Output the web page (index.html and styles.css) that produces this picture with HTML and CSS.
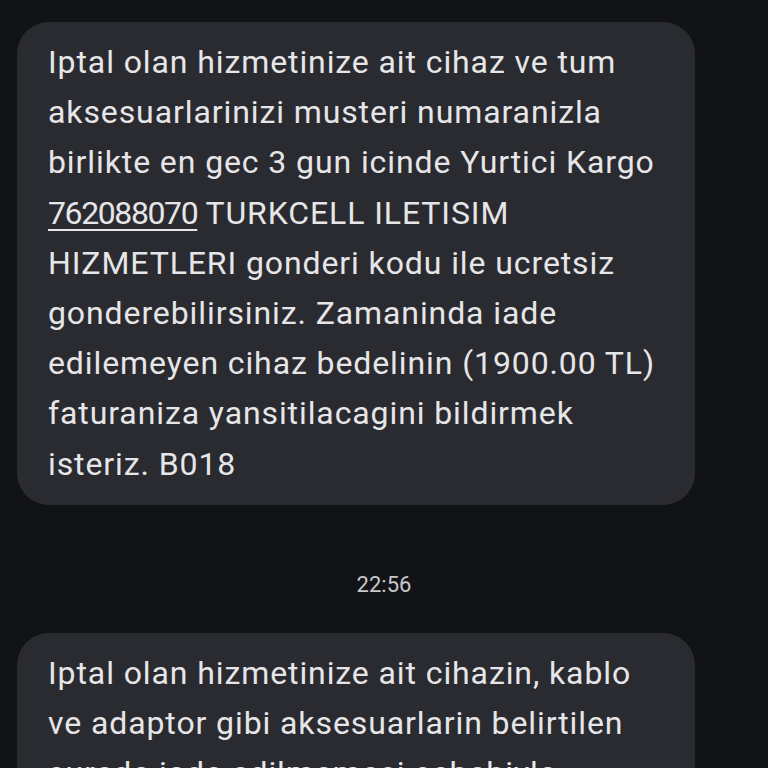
FILE: index.html
```html
<!DOCTYPE html>
<html lang="tr">
<head>
    <meta charset="UTF-8">
    <meta name="viewport" content="width=device-width, initial-scale=1.0">
    <title>Mesajlar</title>
    <link rel="stylesheet" href="styles.css">
</head>
<body>
    <div class="thread">
        <div class="bubble">
            Iptal olan hizmetinize ait cihaz ve tum<br>
            aksesuarlarinizi musteri numaranizla<br>
            birlikte en gec 3 gun icinde Yurtici Kargo<br>
            <span class="link">762088070</span> TURKCELL ILETISIM<br>
            HIZMETLERI gonderi kodu ile ucretsiz<br>
            gonderebilirsiniz. Zamaninda iade<br>
            edilemeyen cihaz bedelinin (1900.00 TL)<br>
            faturaniza yansitilacagini bildirmek<br>
            isteriz. B018
        </div>

        <div class="time">22:56</div>

        <div class="bubble">
            Iptal olan hizmetinize ait cihazin, kablo<br>
            ve adaptor gibi aksesuarlarin belirtilen<br>
            surede iade edilmemesi sebebiyle
        </div>
    </div>
</body>
</html>
```

FILE: styles.css
```css
html, body {
    height: 100%;
    overflow: hidden;
}
body {
    margin: 0;
    background-color: #121317;
    font-family: Roboto, "Noto Sans", sans-serif;
    color: #e6e6e8;
}
.thread {
    padding: 22px 0 0 17px;
    display: flex;
    flex-direction: column;
    align-items: flex-start;
}
.bubble {
    box-sizing: border-box;
    width: 678px;
    background-color: #2a2b30;
    border-radius: 32px;
    padding: 15px 16px 16px 31px;
    font-size: 32px;
    line-height: 50.2px;
    letter-spacing: 0.9px;
    white-space: nowrap;
}
.link {
    letter-spacing: -1.4px;
    text-decoration: underline;
    text-underline-offset: 5px;
    text-decoration-thickness: 2px;
}
.time {
    align-self: stretch;
    margin: 68px 17px 36px 0;
    text-align: center;
    font-size: 22px;
    line-height: 24px;
    color: #c8c8cb;
}
```
